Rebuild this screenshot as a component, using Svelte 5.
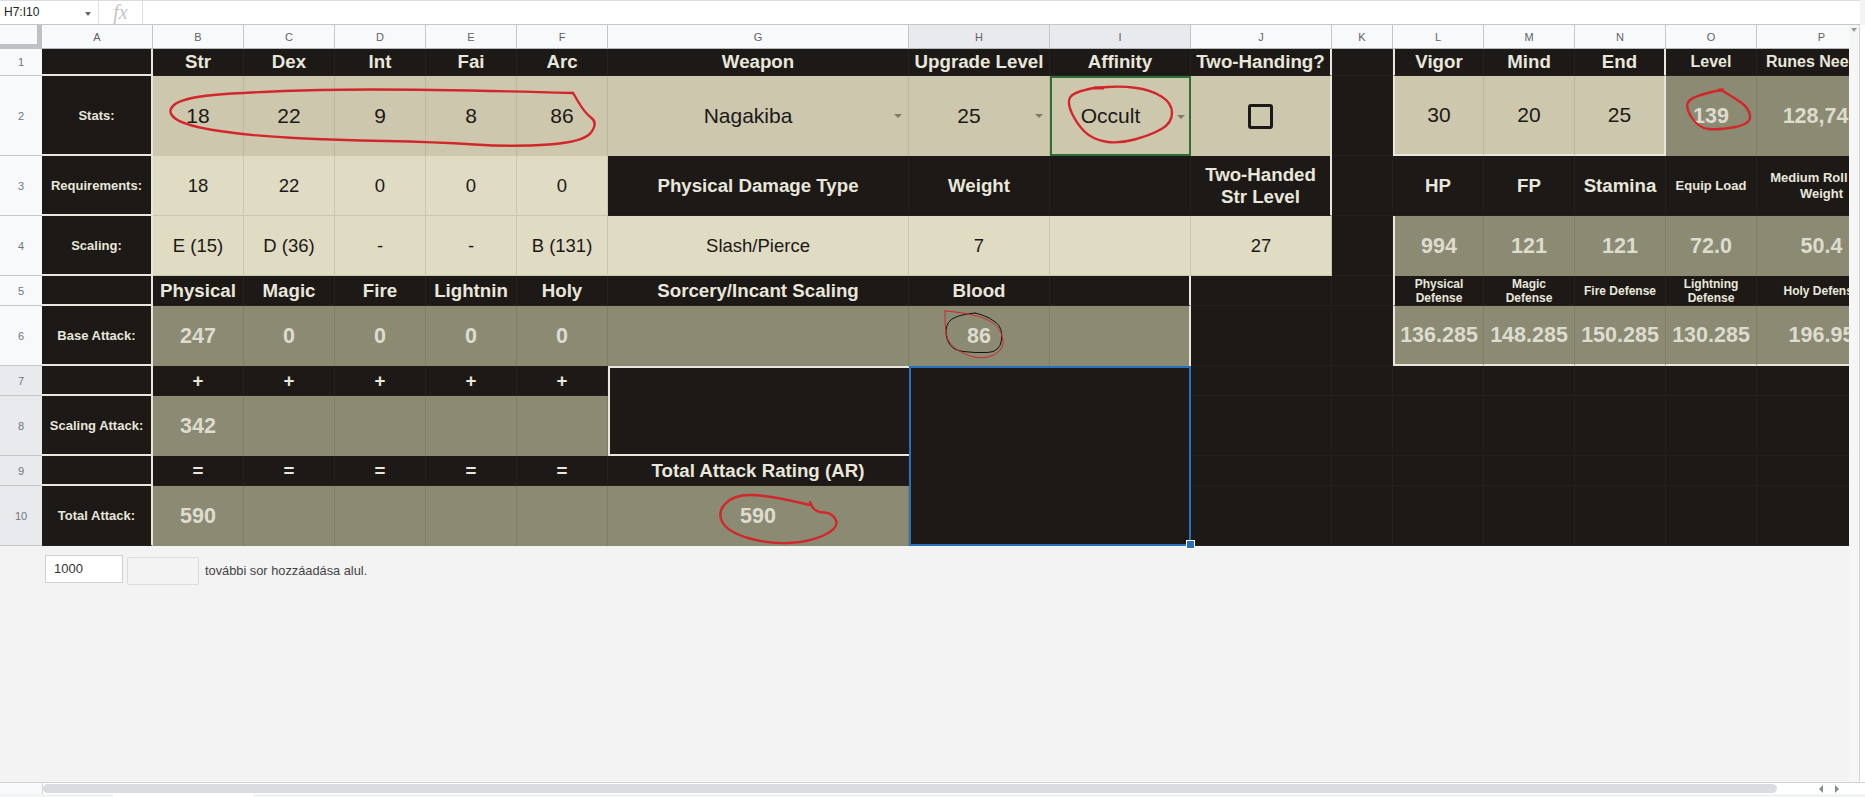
<script>
  const colHeads = ['A', 'B', 'C', 'D', 'E', 'F', 'G', 'H', 'I', 'J', 'K', 'L', 'M', 'N', 'O', 'P'];

  // [text, classes, colspan, rowspan]
  const rows = [
    [
      ['', 'd br bb'], ['Str', 'd h'], ['Dex', 'd h'], ['Int', 'd h'], ['Fai', 'd h'], ['Arc', 'd h'], ['Weapon', 'd h'],
      ['Upgrade Level', 'd h'], ['Affinity', 'd h'], ['Two-Handing?', 'd h br'], ['', 'd'],
      ['Vigor', 'd h bl'], ['Mind', 'd h'], ['End', 'd h br'], ['Level', 'd h2'], ['Runes Needed', 'd h2']
    ],
    [
      ['Stats:', 'd lab br bb'], ['18', 't v'], ['22', 't v'], ['9', 't v'], ['8', 't v'], ['86', 't v'],
      ['Nagakiba', 't v drop'], ['25', 't v drop'], ['Occult', 't v drop active'], ['', 't check br'], ['', 'd'],
      ['30', 't v bl bb'], ['20', 't v bb'], ['25', 't v br bb'], ['139', 'o ov'], ['128,745', 'o ov']
    ],
    [
      ['Requirements:', 'd lab br bb'], ['18', 'l v2'], ['22', 'l v2'], ['0', 'l v2'], ['0', 'l v2'], ['0', 'l v2'],
      ['Physical Damage Type', 'd h'], ['Weight', 'd h'], ['', 'd'], ['Two-Handed\nStr Level', 'd h br'], ['', 'd'],
      ['HP', 'd h'], ['FP', 'd h'], ['Stamina', 'd h'], ['Equip Load', 'd sm'], ['Medium Roll\u00a0\u00a0\u00a0\u00a0\u00a0\u00a0\u00a0\nWeight', 'd sm']
    ],
    [
      ['Scaling:', 'd lab br bb'], ['E (15)', 'l v2'], ['D (36)', 'l v2'], ['-', 'l v2'], ['-', 'l v2'], ['B (131)', 'l v2'],
      ['Slash/Pierce', 'l v2'], ['7', 'l v2'], ['', 'l'], ['27', 'l v2'], ['', 'd'],
      ['994', 'o ov bl'], ['121', 'o ov'], ['121', 'o ov'], ['72.0', 'o ov'], ['50.4', 'o ov']
    ],
    [
      ['', 'd br bb'], ['Physical', 'd h'], ['Magic', 'd h'], ['Fire', 'd h'], ['Lightnin', 'd h'], ['Holy', 'd h'],
      ['Sorcery/Incant Scaling', 'd h'], ['Blood', 'd h'], ['', 'd br'], ['', 'd'], ['', 'd'],
      ['Physical\nDefense', 'd xs bl'], ['Magic\nDefense', 'd xs'], ['Fire Defense', 'd xs'], ['Lightning\nDefense', 'd xs'], ['Holy Defense', 'd xs']
    ],
    [
      ['Base Attack:', 'd lab br bb'], ['247', 'o ov'], ['0', 'o ov'], ['0', 'o ov'], ['0', 'o ov'], ['0', 'o ov'],
      ['', 'o'], ['86', 'o ov'], ['', 'o br'], ['', 'd'], ['', 'd'],
      ['136.285', 'o ov bl bb'], ['148.285', 'o ov bb'], ['150.285', 'o ov bb'], ['130.285', 'o ov bb'], ['196.95', 'o ov bb']
    ],
    [
      ['', 'd br bb'], ['+', 'd h'], ['+', 'd h'], ['+', 'd h'], ['+', 'd h'], ['+', 'd h'],
      ['', 'd box', 1, 2], ['', 'd sel', 2, 4], ['', 'd'], ['', 'd'], ['', 'd'], ['', 'd'], ['', 'd'], ['', 'd'], ['', 'd']
    ],
    [
      ['Scaling Attack:', 'd lab br bb'], ['342', 'o ov'], ['', 'o'], ['', 'o'], ['', 'o'], ['', 'o'],
      ['', 'd'], ['', 'd'], ['', 'd'], ['', 'd'], ['', 'd'], ['', 'd'], ['', 'd']
    ],
    [
      ['', 'd br bb'], ['=', 'd h'], ['=', 'd h'], ['=', 'd h'], ['=', 'd h'], ['=', 'd h'],
      ['Total Attack Rating (AR)', 'd h'], ['', 'd'], ['', 'd'], ['', 'd'], ['', 'd'], ['', 'd'], ['', 'd'], ['', 'd']
    ],
    [
      ['Total Attack:', 'd lab br'], ['590', 'o ov'], ['', 'o'], ['', 'o'], ['', 'o'], ['', 'o'],
      ['590', 'o ov'], ['', 'd'], ['', 'd'], ['', 'd'], ['', 'd'], ['', 'd'], ['', 'd'], ['', 'd']
    ]
  ];

  // smooth closed-ish line through the hand drawn points
  function ink(pts) {
    let d = `M${pts[0][0]} ${pts[0][1]}`;
    for (let i = 1; i < pts.length - 1; i++) {
      const mx = (pts[i][0] + pts[i + 1][0]) / 2;
      const my = (pts[i][1] + pts[i + 1][1]) / 2;
      d += ` Q${pts[i][0]} ${pts[i][1]} ${mx} ${my}`;
    }
    const last = pts[pts.length - 1];
    return d + ` L${last[0]} ${last[1]}`;
  }

  const marks = [
    { w: 2.4, c: '#d3262a', pts: [[573, 93], [395, 88], [245, 92], [182, 98], [166, 112], [186, 126], [253, 136], [336, 140], [435, 142], [514, 147], [584, 142], [598, 123], [585, 113], [573, 93]] },
    { w: 2.4, c: '#d3262a', pts: [[1094, 88], [1073, 92], [1067, 103], [1077, 124], [1092, 139], [1118, 144], [1151, 135], [1172, 123], [1172, 103], [1151, 90], [1122, 86], [1094, 88]] },
    { w: 2.4, c: '#d3262a', pts: [[1721, 90], [1696, 95], [1684, 105], [1698, 128], [1719, 130], [1751, 124], [1749, 108], [1733, 97], [1721, 90]] },
    { w: 1, c: '#111', pts: [[975, 313], [953, 315], [944, 330], [951, 350], [975, 353], [1000, 352], [1003, 328], [989, 317], [975, 313]] },
    { w: 1, c: '#d3262a', pts: [[945, 311], [944, 337], [958, 352], [983, 360], [1004, 350], [1002, 332], [991, 320], [966, 313], [945, 311]] },
    { w: 2.4, c: '#d3262a', pts: [[810, 505], [768, 495], [733, 495], [717, 513], [728, 532], [768, 544], [810, 542], [839, 528], [833, 513], [815, 512], [810, 502]] }
  ];
</script>

<div class="page">
  <div class="toolbar">
    <div class="namebox">H7:I10<span class="caret"></span></div>
    <div class="fx">fx</div>
  </div>

  <div class="body">
    <div class="viewport">
      <div class="sheet">
        <div class="corner"></div>
        {#each colHeads as name, i}
          <div class="colhead" class:on={i === 7 || i === 8}>{name}</div>
        {/each}

        {#each rows as row, r}
          <div class="rowhead" class:on={r >= 6}>{r + 1}</div>
          {#each row as [text, cls, cs, rs]}
            <div class="cell {cls}" style={cs ? `grid-column: span ${cs}; grid-row: span ${rs}` : undefined}>
              {#if cls.includes('check')}
                <span class="box-icon"></span>
              {:else}
                <span class="txt">{text}</span>
              {/if}
              {#if cls.includes('drop')}<span class="arrow"></span>{/if}
              {#if cls.includes('sel')}<span class="handle"></span>{/if}
            </div>
          {/each}
        {/each}
      </div>

      <div class="addrow">
        <div class="count">1000</div>
        <div class="addbtn"></div>
        <div class="addtext">további sor hozzáadása alul.</div>
      </div>
    </div>
    <div class="vscroll"><span class="caret small"></span></div>
  </div>

  <div class="hbar">
    <div class="hleft"></div>
    <div class="thumb"></div>
    <div class="harrows">
      <span class="tri left"></span>
      <span class="tri right"></span>
    </div>
  </div>
  <div class="tabs"><div class="tab"></div></div>

  <svg class="ink" width="1865" height="797" viewBox="0 0 1865 797" fill="none" aria-hidden="true">
    {#each marks as m}
      <path d={ink(m.pts)} stroke={m.c} stroke-width={m.w} stroke-linejoin="round" stroke-linecap="round" />
    {/each}
    <path d="M1094 88h10" stroke="#d3262a" stroke-width="3" />
    <path d="M1718 90h6" stroke="#d3262a" stroke-width="3" />
  </svg>
</div>

<style>
  :global(body) {
    margin: 0;
    background: #f3f3f3;
  }
  .page {
    position: relative;
    width: 1865px;
    height: 797px;
    overflow: hidden;
    display: flex;
    flex-direction: column;
    font-family: "Liberation Sans", Arial, sans-serif;
    background: #f3f3f3;
  }

  .toolbar {
    flex: none;
    height: 25px;
    box-sizing: border-box;
    width: 1860px;
    display: flex;
    background: #fff;
    border-top: 1px solid #dadce0;
    border-bottom: 1px solid #c4c7c5;
  }
  .namebox {
    width: 99px;
    box-sizing: border-box;
    padding-left: 4px;
    font-size: 12px;
    line-height: 23px;
    color: #222;
    border-right: 1px solid #e0e0e0;
    position: relative;
  }
  .caret {
    position: absolute;
    left: 85px;
    top: 11px;
    border: 3px solid transparent;
    border-top: 4px solid #666;
    border-bottom: 0;
  }
  .caret.small {
    left: 2px;
    top: 3px;
    border-top-color: #999;
  }
  .fx {
    width: 44px;
    box-sizing: border-box;
    text-align: center;
    font: italic 20px/23px "Liberation Serif", serif;
    color: #c4c4c4;
    border-right: 1px solid #e0e0e0;
  }

  .body {
    flex: none;
    height: 757px;
    display: flex;
    background: #fff;
  }
  .viewport {
    width: 1849px;
    overflow: hidden;
    background: #f3f3f3;
  }
  .vscroll {
    position: relative;
    width: 11px;
    box-sizing: border-box;
    background: #f6f6f6;
    border-right: 1px solid #d5d5d5;
  }

  .sheet {
    display: grid;
    grid-template-columns: 42px 111px repeat(5, 91px) 301px 141px 141px 141px 61px repeat(4, 91px) 130px;
    grid-template-rows: 24px 27px 80px 60px 60px 30px 60px 30px 60px 30px 60px;
    width: 1849px;
  }
  .corner {
    background: #f8f9fa;
    border-right: 5px solid #bdc1c6;
    border-bottom: 5px solid #bdc1c6;
    box-sizing: border-box;
  }
  .colhead {
    display: flex;
    align-items: center;
    justify-content: center;
    box-sizing: border-box;
    font-size: 11px;
    color: #5f6368;
    background: #f8f9fa;
    border-right: 1px solid #c4c7c5;
    border-bottom: 1px solid #b5b7b8;
  }
  .colhead.on {
    background: #e8eaed;
  }
  .rowhead {
    display: flex;
    align-items: center;
    justify-content: center;
    box-sizing: border-box;
    font-size: 11px;
    color: #70757a;
    background: #f8f9fa;
    border-bottom: 1px solid #c4c7c5;
  }
  .rowhead.on {
    background: #e8eaed;
  }

  .cell {
    position: relative;
    box-sizing: border-box;
    display: flex;
    align-items: center;
    justify-content: center;
    overflow: hidden;
    text-align: center;
    min-width: 0;
  }
  .txt {
    white-space: pre;
    flex: none;
  }
  .d {
    background: #1c1917;
    color: #e9e7db;
    border-right: 1px solid #23201e;
    border-bottom: 1px solid #23201e;
  }
  .t {
    background: #cdc7ae;
    color: #1b1917;
    border-right: 1px solid #bdb79f;
  }
  .l {
    background: #e0dbc3;
    color: #1b1917;
    border-right: 1px solid #cbc6ae;
    border-bottom: 1px solid #cbc6ae;
  }
  .o {
    background: #8b8b73;
    color: #dddccf;
    border-right: 1px solid #7f7f69;
  }
  .h {
    font-size: 18.7px;
    font-weight: 700;
    line-height: 22px;
  }
  .h2 {
    font-size: 16px;
    font-weight: 700;
  }
  .lab {
    font-size: 13px;
    font-weight: 700;
  }
  .sm {
    font-size: 13px;
    font-weight: 700;
    line-height: 16px;
  }
  .xs {
    font-size: 12px;
    font-weight: 700;
    line-height: 14px;
  }
  .v {
    font-size: 21px;
  }
  .v2 {
    font-size: 18.5px;
  }
  .ov {
    font-size: 21.5px;
    font-weight: 700;
  }

  .br {
    border-right: 2px solid #e9e7db;
  }
  .bb {
    border-bottom: 2px solid #e9e7db;
  }
  .bl {
    border-left: 2px solid #e9e7db;
  }
  .box {
    border: 2px solid #e9e7db;
    border-right: 0;
  }

  .drop {
    padding-right: 20px;
  }
  .arrow {
    position: absolute;
    right: 6px;
    top: 38px;
    border: 4px solid transparent;
    border-top: 4px solid #7f7a66;
    border-bottom: 0;
  }
  .active {
    border: 2px solid #2c6e36;
  }
  .active .arrow {
    right: 4px;
    top: 37px;
  }
  .box-icon {
    width: 25px;
    height: 25px;
    box-sizing: border-box;
    border: 3px solid #1b1917;
    border-radius: 3px;
  }
  .sel {
    overflow: visible;
    border: 2px solid #2a6fbe;
    z-index: 1;
  }
  .handle {
    position: absolute;
    right: -5px;
    bottom: -4px;
    width: 7px;
    height: 7px;
    background: #2a6fbe;
    outline: 1px solid #fff;
  }

  .addrow {
    display: flex;
    align-items: flex-start;
    gap: 4px;
    padding: 9px 0 0 45px;
  }
  .count {
    width: 78px;
    height: 28px;
    box-sizing: border-box;
    padding-left: 8px;
    font-size: 13px;
    line-height: 26px;
    color: #333;
    background: #fff;
    border: 1px solid #d0d0d0;
  }
  .addbtn {
    width: 72px;
    height: 28px;
    margin-top: 2px;
    box-sizing: border-box;
    background: #f3f3f3;
    border: 1px solid #dcdcdc;
    border-radius: 2px;
  }
  .addtext {
    margin: 8px 0 0 2px;
    font-size: 12.8px;
    line-height: 16px;
    color: #444;
  }

  .hbar {
    flex: none;
    height: 11px;
    display: flex;
    align-items: center;
    border-top: 1px solid #d5d5d5;
    background: #fff;
  }
  .hleft {
    width: 43px;
    height: 100%;
    background: #f8f9fa;
    border-right: 1px solid #d5d5d5;
    box-sizing: border-box;
  }
  .thumb {
    width: 1734px;
    height: 9px;
    border-radius: 5px;
    background: #dadce0;
  }
  .harrows {
    margin-left: 39px;
    display: flex;
    gap: 12px;
    align-items: center;
    padding-left: 3px;
  }
  .tri {
    width: 0;
    height: 0;
    border: 4px solid transparent;
  }
  .tri.left {
    border-left: 0;
    border-right: 4px solid #888;
  }
  .tri.right {
    border-right: 0;
    border-left: 4px solid #888;
  }
  .tabs {
    flex: none;
    height: 4px;
    display: flex;
    background: #f1f3f4;
    padding-left: 113px;
  }
  .tab {
    width: 140px;
    background: #fff;
  }

  .ink {
    position: absolute;
    left: 0;
    top: 0;
    pointer-events: none;
    z-index: 2;
  }
</style>
